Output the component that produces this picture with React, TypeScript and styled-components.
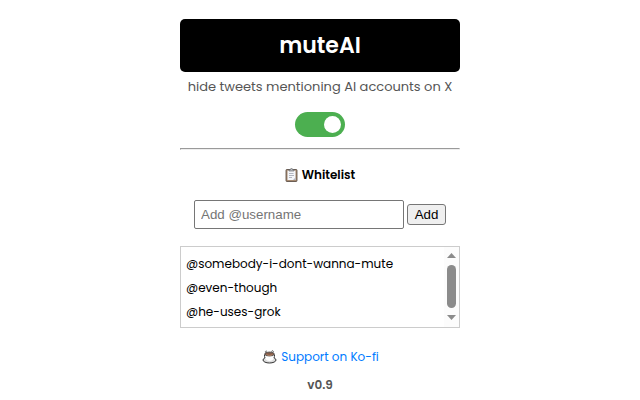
import React, { useState } from "react";
import styled, { createGlobalStyle } from "styled-components";

const GlobalStyle = createGlobalStyle`
  *, *::before, *::after { box-sizing: border-box; }
  body {
    margin: 0;
    background: #fff;
    color: #000;
    font-family: Poppins, Inter, sans-serif;
    overflow: hidden;
  }
`;

const Popup = styled.main`
  width: 280px;
  margin: 0 auto;
  padding-top: 19px;
  display: flex;
  flex-direction: column;
`;

const Title = styled.h1`
  height: 53px;
  margin: 0;
  border-radius: 5px;
  background: #000;
  color: #fff;
  font-size: 22px;
  font-weight: 600;
  line-height: 53px;
  text-align: center;
`;

const Tagline = styled.p`
  height: 20px;
  margin: 5px 0 0;
  color: #555;
  font-size: 13px;
  line-height: 20px;
  text-align: center;
  white-space: nowrap;
`;

const Toggle = styled.button<{ $on: boolean }>`
  width: 50px;
  height: 25px;
  margin: 15px auto 0;
  padding: 0 4px;
  border: 0;
  border-radius: 13px;
  background: ${({ $on }) => ($on ? "#4caf50" : "#ccc")};
  display: flex;
  align-items: center;
  justify-content: ${({ $on }) => ($on ? "flex-end" : "flex-start")};
`;

const Knob = styled.span`
  width: 17px;
  height: 17px;
  border-radius: 50%;
  background: #fff;
`;

const Divider = styled.hr`
  width: 100%;
  height: 2px;
  margin: 11px 0 0;
  border: 1px solid;
  border-color: #9a9a9a #eee #eee #9a9a9a;
`;

const SectionTitle = styled.h2`
  height: 20px;
  margin: 15px 0 0;
  display: flex;
  align-items: center;
  justify-content: center;
  gap: 4px;
  font-size: 12px;
  font-weight: 600;
  line-height: 20px;
`;

const Form = styled.form`
  margin-top: 15px;
  display: flex;
  align-items: center;
  justify-content: center;
  gap: 3px;
`;

const Field = styled.input`
  width: 210px;
  height: 29px;
  padding: 0 6px;
  border: 1px solid #767676;
  border-radius: 2px;
  font: 13.333px "Liberation Sans", sans-serif;
  &::placeholder { color: #757575; }
`;

const AddButton = styled.button`
  width: 39px;
  height: 21px;
  padding: 0;
  border: 1px solid #767676;
  border-radius: 3px;
  background: #efefef;
  color: #000;
  font: 13.333px "Liberation Sans", sans-serif;
`;

const ListBox = styled.div`
  height: 82px;
  margin-top: 17px;
  border: 1px solid #ccc;
  display: flex;
  justify-content: space-between;
`;

const Names = styled.ul`
  margin: 0;
  padding: 5px;
  list-style: none;
`;

const Name = styled.li`
  height: 24px;
  font-size: 12px;
  line-height: 24px;
  white-space: nowrap;
`;

const ScrollTrack = styled.div`
  width: 15px;
  padding: 6px 0 7px;
  background: #fcfcfc;
  display: flex;
  flex-direction: column;
  align-items: center;
`;

const Thumb = styled.div`
  width: 9px;
  height: 43px;
  margin: 7px 0;
  border-radius: 5px;
  background: #8b8b8b;
`;

const Support = styled.div`
  height: 20px;
  margin-top: 19px;
  padding-left: 1px;
  display: flex;
  align-items: center;
  justify-content: center;
  gap: 4px;
`;

const Link = styled.a`
  color: #007bff;
  font-size: 12px;
  line-height: 20px;
  text-decoration: none;
`;

const Version = styled.footer`
  height: 20px;
  margin-top: 8px;
  color: #555;
  font-size: 12px;
  font-weight: 600;
  line-height: 20px;
  text-align: center;
`;

const Clipboard = () => (
  <svg width="13" height="15" viewBox="0 0 13 15">
    <rect x="1" y="1.5" width="11" height="12" rx=".8" fill="#a78b72" stroke="#51443b" strokeWidth=".8" />
    <path d="M2.5 2.5h8V12h-8z" fill="#f4f6fa" />
    <path d="M4 3V1.5h1.3C5.5 0 7.5 0 7.7 1.5H9V3z" fill="#b8bdc3" stroke="#555" strokeWidth=".6" />
    <path d="M4 5.5h4.5M4 7.5h5M4 9.5h3" stroke="#a0a5b0" strokeWidth=".8" />
    <path d="m8 12 2.5-2.5V12z" fill="#b0b5c2" />
  </svg>
);

const Coffee = () => (
  <svg width="15" height="14" viewBox="0 0 15 14">
    <ellipse cx="7.5" cy="10" rx="6.5" ry="3" fill="#ddd" stroke="#333" />
    <path d="M2.5 4.5C2.3 8 3.8 11 7.5 11s5.2-3 5-6.5z" fill="#fff" />
    <path d="M2.5 4.5c-.1 1.4.1 2.5.5 3.5M12.5 4.5c.1 1.4-.1 2.5-.5 3.5" fill="none" stroke="#333" />
    <ellipse cx="7.5" cy="4" rx="4.8" ry="2" fill="#825b48" stroke="#555" strokeWidth=".9" />
    <path d="M3.5 2.5C2.8 1.5 4 .7 5 1.3M9.5 1.5c.4-1.3 2.4-1 1.8.7" fill="none" stroke="#555" strokeWidth=".9" />
    <path d="M4.5 4.6c1.6 1 4.4 1 6 0" fill="none" stroke="#c48e6e" strokeWidth=".9" />
  </svg>
);

const Arrow = ({ down = false }: { down?: boolean }) => (
  <svg width="9" height="5" viewBox="0 0 9 5">
    <path d={down ? "M0 0h9L4.5 5z" : "M4.5 0 9 5H0z"} fill="#8b8b8b" />
  </svg>
);

const accounts = ["@somebody-i-dont-wanna-mute", "@even-though", "@he-uses-grok"];

export default function App() {
  const [enabled, setEnabled] = useState(true);
  return (
    <>
      <GlobalStyle />
      <Popup>
        <Title>muteAI</Title>
        <Tagline>hide tweets mentioning AI accounts on X</Tagline>
        <Toggle type="button" $on={enabled} onClick={() => setEnabled(!enabled)}>
          <Knob />
        </Toggle>
        <Divider />
        <SectionTitle><Clipboard />Whitelist</SectionTitle>
        <Form onSubmit={(e) => e.preventDefault()}>
          <Field placeholder="Add @username" />
          <AddButton>Add</AddButton>
        </Form>
        <ListBox>
          <Names>
            {accounts.map((name) => <Name key={name}>{name}</Name>)}
          </Names>
          <ScrollTrack><Arrow /><Thumb /><Arrow down /></ScrollTrack>
        </ListBox>
        <Support><Coffee /><Link href="#">Support on Ko-fi</Link></Support>
        <Version>v0.9</Version>
      </Popup>
    </>
  );
}
